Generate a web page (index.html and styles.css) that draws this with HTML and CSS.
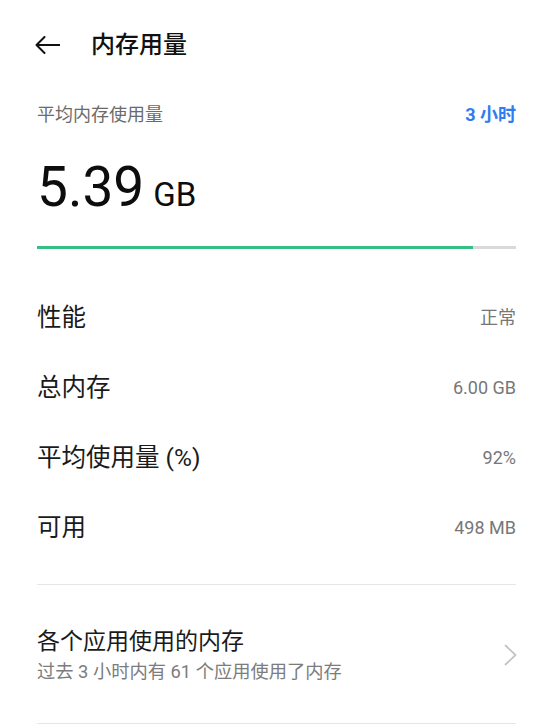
FILE: index.html
```html
<!DOCTYPE html>
<html lang="zh-CN">
<head>
<meta charset="utf-8">
<title>内存用量</title>
<link rel="stylesheet" href="styles.css">
</head>
<body>
<div class="page">
  <header class="header">
    <svg class="back" width="25" height="18" viewBox="0 0 25 18" aria-hidden="true">
      <path d="M1.5 9 H24.5 M9.5 1 L1.5 9 L9.5 17" fill="none" stroke="#111" stroke-width="2" stroke-linecap="round" stroke-linejoin="round"/>
    </svg>
    <h1 class="title">内存用量</h1>
  </header>

  <div class="summary">
    <span class="summary-label">平均内存使用量</span>
    <span class="summary-range">3 小时</span>
  </div>

  <div class="big">
    <span class="big-num">5.39</span><span class="big-unit">GB</span>
  </div>

  <div class="bar"><div class="bar-fill" style="width: 91%"></div></div>

  <div class="rows">
    <div class="row"><span class="row-label">性能</span><span class="row-value">正常</span></div>
    <div class="row"><span class="row-label">总内存</span><span class="row-value">6.00 GB</span></div>
    <div class="row"><span class="row-label">平均使用量 (%)</span><span class="row-value">92%</span></div>
    <div class="row"><span class="row-label">可用</span><span class="row-value">498 MB</span></div>
  </div>

  <div class="divider"></div>

  <div class="apps">
    <div class="apps-text">
      <div class="apps-title">各个应用使用的内存</div>
      <div class="apps-sub">过去 3 小时内有 61 个应用使用了内存</div>
    </div>
    <svg class="chev" width="13" height="22" viewBox="0 0 13 22" aria-hidden="true">
      <path d="M1.5 1.5 L11.5 11 L1.5 20.5" fill="none" stroke="#c4c4c4" stroke-width="1.8" stroke-linecap="round" stroke-linejoin="round"/>
    </svg>
  </div>

  <div class="divider"></div>
</div>
</body>
</html>
```

FILE: styles.css
```css
html, body {
  margin: 0;
  padding: 0;
  background: #ffffff;
}

body {
  font-family: Roboto, "Noto Sans CJK SC", "Noto Sans", sans-serif;
  color: #1a1a1a;
}

.page {
  padding: 0 37px;
}

.header {
  height: 90px;
  display: flex;
  align-items: center;
}

.back {
  display: block;
  margin-left: -2px;
  margin-right: 31px;
}

.title {
  margin: 0;
  font-size: 24px;
  font-weight: 500;
  line-height: 30px;
  color: #111111;
}

.summary {
  height: 50px;
  display: flex;
  align-items: center;
  justify-content: space-between;
}

.summary-label {
  font-size: 18px;
  line-height: 24px;
  color: #6b6b6b;
}

.summary-range {
  font-size: 18px;
  line-height: 24px;
  font-weight: 700;
  color: #2f7bf0;
}

.big {
  padding-top: 20px;
  height: 57px;
  line-height: 1;
  color: #0d0d0d;
  display: flex;
  align-items: baseline;
}

.big-num {
  font-size: 55px;
  line-height: 1;
}

.big-unit {
  font-size: 33px;
  line-height: 1;
  margin-left: 9px;
}

.bar {
  margin-top: 29px;
  height: 3px;
  background: #d9d9d9;
}

.bar-fill {
  height: 100%;
  background: #35bf83;
}

.rows {
  margin-top: 34px;
}

.row {
  height: 70px;
  display: flex;
  align-items: center;
  justify-content: space-between;
}

.row-label {
  font-size: 24.5px;
  line-height: 30px;
  color: #1a1a1a;
}

.row-value {
  font-size: 18px;
  line-height: 24px;
  color: #777777;
}

.divider {
  height: 1px;
  background: #e6e6e6;
}

.rows + .divider {
  margin-top: 21px;
}

.apps {
  height: 138px;
  display: flex;
  align-items: center;
  justify-content: space-between;
}

.apps-text {
  padding-top: 6px;
}

.apps-title {
  font-size: 23px;
  line-height: 30px;
  color: #1a1a1a;
}

.apps-sub {
  font-size: 18.3px;
  line-height: 30px;
  color: #7c7c7c;
}

.chev {
  display: block;
  margin-right: -1px;
  margin-top: 2px;
}
```
